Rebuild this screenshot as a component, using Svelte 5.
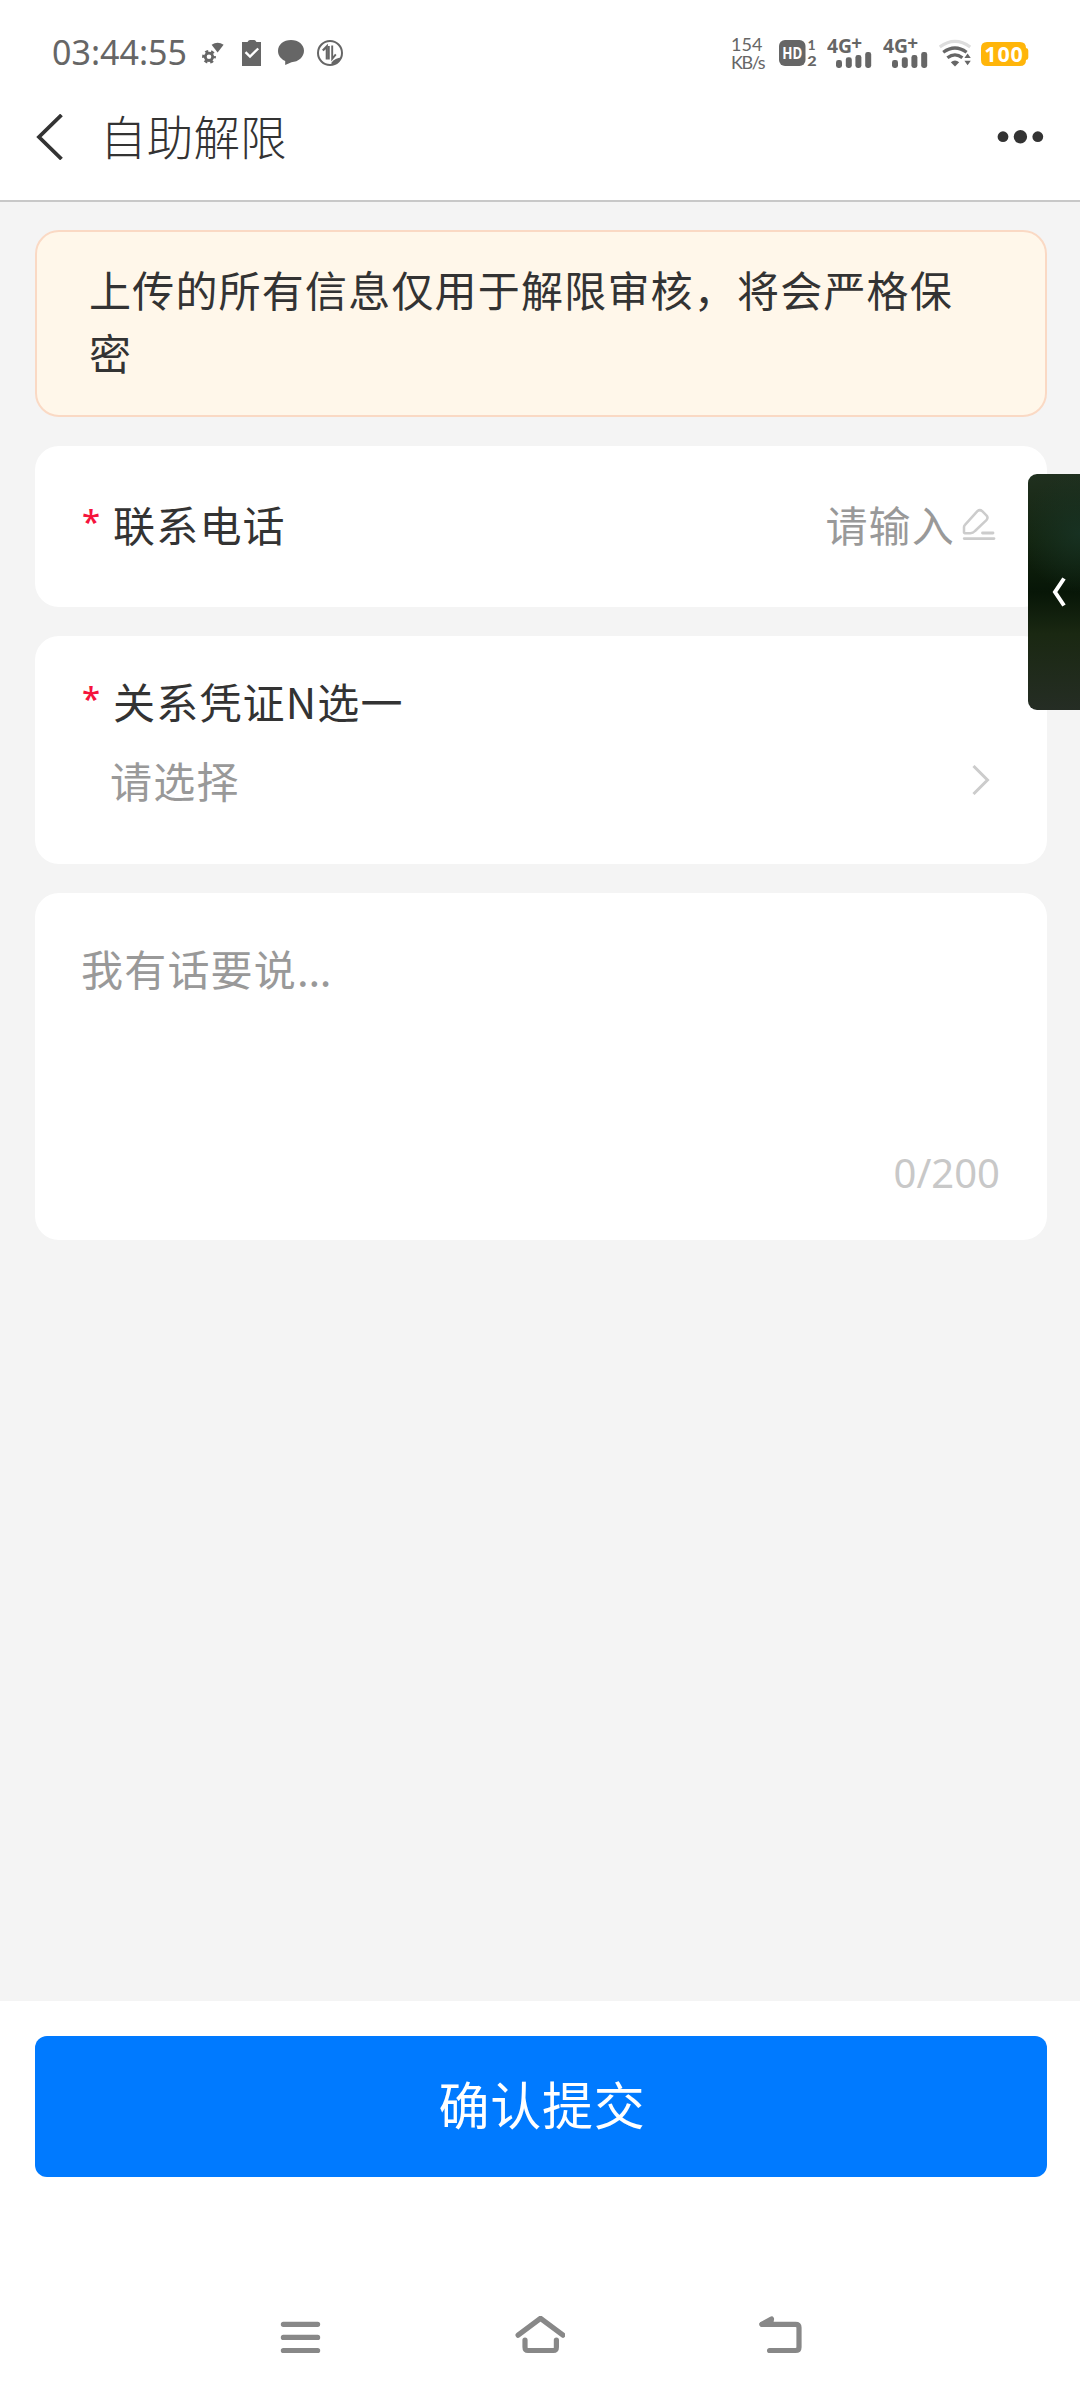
<script>
  const time = '03:44:55';
  const maxLength = 200;

  let phone = '';
  let message = '';

  const signals = [1, 2];
  const bars = [
    { x: 9, y: 28 },
    { x: 18.8, y: 25.3 },
    { x: 28.4, y: 23 },
    { x: 38.2, y: 20 }
  ];
</script>

<div class="page">
  <div class="status-bar">
    <span class="time">{time}</span>
    <svg class="gear" width="24" height="42" viewBox="0 0 24 42">
      <circle cx="7" cy="24.8" r="3.7" fill="none" stroke="#666" stroke-width="2.8" />
      <circle cx="7" cy="24.8" r="5.6" fill="none" stroke="#666" stroke-width="2.6" stroke-dasharray="3 2.864" stroke-dashoffset="1.5" />
      <path d="M9.6 12.8Q15.6 8.6 21.6 12.8L15.6 20.4Z" fill="#666" />
    </svg>
    <svg class="clipboard" width="20" height="42" viewBox="0 0 20 42">
      <path d="M1 10H5.5Q6.5 8 8 8H12Q13.5 8 14.5 10H19V34H0V10Z" fill="#666" />
      <path d="M3.5 20.2L8 24.5L16.2 16.5" fill="none" stroke="#fff" stroke-width="2.4" />
    </svg>
    <svg class="bubble" width="27" height="42" viewBox="0 0 27 42">
      <path d="M13 8C20.4 8 26 12.6 26 18.8S20.4 30 13.5 30.2L7.2 33V29C2.8 27 0 23.4 0 19C0 12.6 5.6 8 13 8Z" fill="#666" />
    </svg>
    <svg class="data" width="27" height="42" viewBox="0 0 27 42">
      <circle cx="13" cy="21" r="12" fill="none" stroke="#666" stroke-width="2" />
      <path d="M5.8 18.6L9.8 14.4V27.5" fill="none" stroke="#666" stroke-width="2.2" />
      <path d="M11.8 14V27.5M15.2 13.5V26.8L18.8 22.4" fill="none" stroke="#666" stroke-width="1.9" />
      <path d="M14.5 30.5Q18 25.6 24.5 25.4Q22 32 14.5 32.5Z" fill="#666" />
    </svg>

    <div class="speed">
      <span>154</span>
      <span class="unit">KB/s</span>
    </div>
    <svg class="hd" width="38" height="42" viewBox="0 0 38 42">
      <rect x="0" y="8" width="26.5" height="26" rx="6" fill="#666" />
      <text x="13.2" y="26.8" text-anchor="middle" textLength="20" lengthAdjust="spacingAndGlyphs" font-size="16.5" font-weight="700" fill="#fff">HD</text>
      <text class="sim" x="28.4" y="18" font-size="14" font-weight="700" fill="#666">1</text>
      <text class="sim" x="28.2" y="34" font-size="14" font-weight="900" fill="#666" textLength="9.4" lengthAdjust="spacingAndGlyphs">2</text>
    </svg>
    {#each signals as signal}
      <svg class="signal" width="45" height="50" viewBox="0 -4 45 50">
        <text x="0" y="21" font-size="20" font-weight="700" fill="#666" textLength="25" lengthAdjust="spacingAndGlyphs">4G</text>
        <text x="24.2" y="18.4" font-size="19" font-weight="700" fill="#666">+</text>
        {#each bars as bar}
          <rect x={bar.x} y={bar.y} width="6" height={36 - bar.y} rx="2.4" fill="#666" />
        {/each}
      </svg>
    {/each}
    <svg class="wifi" width="33" height="42" viewBox="0 0 33 42">
      <g fill="none" stroke="#666" stroke-width="3.2">
        <path d="M.8 15Q16 3.8 31.2 15" stroke="#ddd" />
        <path d="M4.2 20.2Q16 11.8 27.6 20.2" />
        <path d="M8.4 25.8Q16 19.8 23.4 25.8" />
      </g>
      <path d="M11.8 30.2Q16 27 20.2 30.2L16 34.4Z" fill="#666" />
      <path d="M25.4 26L28.6 21.5L31.8 26ZM25.4 28.8L28.6 33.3L31.8 28.8Z" fill="#666" />
    </svg>
    <svg class="battery" width="48" height="42" viewBox="0 0 48 42">
      <path d="M6 10H39Q45 10 45 16Q47.3 16.4 47.3 18.5V25.5Q47.3 27.6 45 28Q45 34 39 34H6Q0 34 0 28V16Q0 10 6 10Z" fill="#ffb50a" />
      <text x="22.6" y="29.6" text-anchor="middle" textLength="38.5" font-size="21.5" font-weight="700" fill="#fff">100</text>
    </svg>
  </div>

  <header class="header">
    <svg class="back" width="28" height="46" viewBox="0 0 28 46">
      <path d="M25.5 1L3 23L25.5 45" fill="none" stroke="#333" stroke-width="3.8" />
    </svg>
    <h1>自助解限</h1>
    <svg class="more" width="48" height="14" viewBox="0 0 48 14">
      <circle cx="6" cy="6.7" r="5.4" />
      <circle cx="23.4" cy="6.7" r="6.7" />
      <circle cx="40.8" cy="6.7" r="5.4" />
    </svg>
  </header>

  <main class="content">
    <div class="notice">上传的所有信息仅用于解限审核，将会严格保密</div>

    <section class="card phone">
      <span class="required">*</span>
      <span class="label">联系电话</span>
      <span class="placeholder">{phone || '请输入'}</span>
      <svg class="pen" width="34" height="34" viewBox="0 0 34 34">
        <g fill="none" stroke="#ccc" stroke-width="2.5" stroke-linecap="round" stroke-linejoin="round">
          <path d="M2 25.6V20Q2 18.8 3 17.8L15.4 4.2Q17.8 2 20.2 4.2L24.4 8.4Q26.6 10.8 24.4 13.2L13 24Q11 26.2 8.4 26.2H2.6Z" />
          <path d="M20.5 26H31M2.2 31.6H32" stroke-width="2.8" />
        </g>
      </svg>
    </section>

    <section class="card proof">
      <div class="row">
        <span class="required">*</span>
        <span class="label">关系凭证N选一</span>
      </div>
      <div class="row select">
        <span class="placeholder">请选择</span>
        <svg width="18" height="30" viewBox="0 0 18 30">
          <path d="M1.5 1L15.5 15L1.5 29" fill="none" stroke="#ccc" stroke-width="3" />
        </svg>
      </div>
    </section>

    <section class="card message">
      <span class="placeholder">我有话要说<span class="dots">...</span></span>
      <span class="counter">{message.length}/{maxLength}</span>
    </section>
  </main>

  <footer class="footer">
    <button class="submit">确认提交</button>
  </footer>

  <nav class="nav-bar">
    <svg width="50" height="42" viewBox="0 0 50 42">
      <path d="M8.4 8.3H42.6M8.4 21.4H42.6M8.4 34.5H42.6" />
    </svg>
    <svg width="50" height="42" viewBox="0 0 50 42">
      <path d="M3.1 19.2L25.5 2.3L48 19.2" />
      <path d="M10 24V31Q10 34.5 13 34.5H38.4Q41.4 34.5 41.4 31V24" />
    </svg>
    <svg width="50" height="42" viewBox="0 0 50 42">
      <path d="M7 8.3L16.5 3L15.5 8.3" fill="#888" />
      <path d="M7 8.3H40.5Q44 8.3 44 11.6V31.2Q44 34.5 40.5 34.5H14.6" />
    </svg>
  </nav>

  <!-- edge handle floating above the form -->
  <div class="side-handle">
    <svg width="14" height="30" viewBox="0 0 14 30">
      <path d="M12 1.5L3 15L12 28.5" fill="none" stroke="#fff" stroke-width="4" />
    </svg>
  </div>
</div>

<style>
  :global(body) {
    margin: 0;
    background: #fff;
  }

  .page {
    position: relative;
    display: flex;
    flex-direction: column;
    width: 1080px;
    height: 2400px;
    background: #fff;
    color: #333;
    font-family: 'Noto Sans', 'Noto Sans CJK SC', sans-serif;
    overflow: hidden;
  }

  svg {
    display: block;
    flex: none;
  }

  .status-bar {
    display: flex;
    align-items: center;
    box-sizing: border-box;
    height: 74px;
    padding: 32px 0 0 52px;
    color: #666;
  }

  .time {
    width: 150px;
    font-size: 34px;
    line-height: 40px;
    padding-bottom: 2px;
    white-space: nowrap;
  }

  .clipboard {
    margin-left: 16px;
  }

  .bubble {
    margin-left: 16px;
  }

  .data {
    margin-left: 12px;
  }

  .speed {
    display: flex;
    flex-direction: column;
    width: 48px;
    margin-left: 387px;
    font-family: Lato, sans-serif;
    font-size: 18px;
    line-height: 18px;
  }

  .unit {
    letter-spacing: -1.4px;
  }

  .sim {
    font-family: Lato, sans-serif;
  }

  .signal {
    margin-left: 10px;
  }

  .signal + .signal {
    margin-left: 11px;
  }

  .wifi {
    margin-left: 11px;
  }

  .battery {
    margin-left: 9px;
  }

  .header {
    display: flex;
    align-items: center;
    height: 126px;
    padding: 0 35px 0 36px;
    border-bottom: 2px solid #c8c8c8;
  }

  h1 {
    flex: 1;
    margin: 0 0 5px 36px;
    font-family: 'Noto Sans CJK SC', sans-serif;
    font-size: 46.5px;
    font-weight: 300;
    line-height: 60px;
    letter-spacing: 0.2px;
  }

  .more {
    fill: #333;
  }

  .content {
    display: flex;
    flex-direction: column;
    gap: 29px;
    box-sizing: border-box;
    height: 1799px;
    padding: 28px 33px 0 35px;
    background: #f4f4f4;
    font-family: 'Noto Sans CJK SC', sans-serif;
    font-size: 42px;
    letter-spacing: 1.2px;
  }

  .notice {
    box-sizing: border-box;
    height: 187px;
    padding: 25px 75px 0 52px;
    border: 2px solid #fad9c4;
    border-radius: 24px;
    background: #fff7ea;
    line-height: 63px;
  }

  .card {
    box-sizing: border-box;
    padding: 0 47px;
    border-radius: 24px;
    background: #fff;
    line-height: 60px;
  }

  .required {
    width: 31px;
    padding-bottom: 5px;
    color: #f5143c;
    font-family: 'Noto Sans', sans-serif;
    font-size: 33px;
    font-weight: 500;
    line-height: 55px;
  }

  .placeholder {
    color: #999;
  }

  .phone {
    display: flex;
    align-items: center;
    height: 161px;
    padding-right: 51px;
    padding-bottom: 5px;
  }

  .phone .label {
    flex: 1;
  }

  .pen {
    margin-left: 7px;
  }

  .proof {
    height: 228px;
    padding-top: 35px;
  }

  .row {
    display: flex;
    align-items: center;
  }

  .select {
    justify-content: space-between;
    margin-top: 19px;
    padding: 0 10px 0 28px;
  }

  .message {
    display: flex;
    flex-direction: column;
    justify-content: space-between;
    height: 347px;
    padding-top: 45px;
    padding-left: 46px;
    padding-bottom: 37px;
  }

  .dots {
    letter-spacing: -0.3px;
  }

  .counter {
    align-self: flex-end;
    color: #c8c8c8;
    font-family: 'Noto Sans', sans-serif;
    font-size: 40px;
    letter-spacing: 0;
  }

  .footer {
    padding: 35px 33px 0 35px;
  }

  .submit {
    display: block;
    width: 100%;
    height: 141px;
    padding: 0 0 7px 2px;
    border: 0;
    border-radius: 12px;
    background: #007aff;
    color: #fff;
    font-family: 'Noto Sans CJK SC', sans-serif;
    font-size: 51px;
    letter-spacing: 0.8px;
  }

  .nav-bar {
    display: flex;
    justify-content: center;
    gap: 190px;
    margin-top: 139px;
    fill: none;
    stroke: #888;
    stroke-width: 5.2;
    stroke-linecap: round;
    stroke-linejoin: round;
  }

  .side-handle {
    position: absolute;
    top: 474px;
    right: 0;
    display: flex;
    align-items: center;
    box-sizing: border-box;
    width: 52px;
    height: 236px;
    padding-left: 24px;
    border-radius: 9px 0 0 9px;
    background:
      radial-gradient(circle at 100% 25%, rgba(24, 52, 38, 0.8), transparent 60px),
      linear-gradient(180deg, #20301f 0%, #13240f 28%, #071607 50%, #1a2812 68%, #252d24 100%);
  }
</style>
